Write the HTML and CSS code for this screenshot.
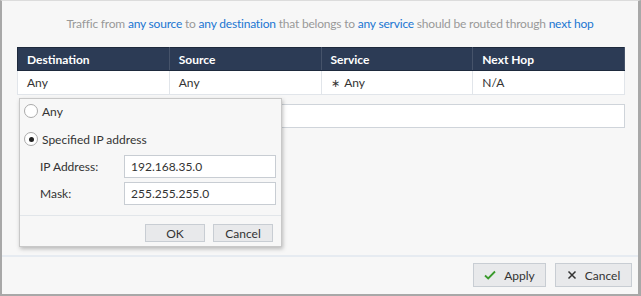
FILE: index.html
```html
<!DOCTYPE html>
<html lang="en">
<head>
    <meta charset="UTF-8">
    <title>Route Rule</title>
    <link rel="stylesheet" href="styles.css">
</head>
<body>
    <div class="frame">
        <p class="summary">
            Traffic from <a href="#">any source</a> to <a href="#">any destination</a> that belongs to <a href="#">any service</a> should be routed through <a href="#">next hop</a>
        </p>

        <div class="rule-area">
            <table class="rules">
                <thead>
                    <tr>
                        <th>Destination</th>
                        <th>Source</th>
                        <th>Service</th>
                        <th>Next Hop</th>
                    </tr>
                </thead>
                <tbody>
                    <tr>
                        <td>Any</td>
                        <td>Any</td>
                        <td><span class="star">&#x2217;</span> Any</td>
                        <td>N/A</td>
                    </tr>
                </tbody>
            </table>

            <div class="edit-box"></div>

            <!-- destination picker popup -->
            <div class="popup">
                <label class="radio-row">
                    <span class="radio"></span>
                    Any
                </label>
                <label class="radio-row">
                    <span class="radio checked"></span>
                    Specified IP address
                </label>
                <div class="field-row">
                    <span class="field-label">IP Address:</span>
                    <input class="field" type="text" value="192.168.35.0">
                </div>
                <div class="field-row">
                    <span class="field-label">Mask:</span>
                    <input class="field" type="text" value="255.255.255.0">
                </div>
                <div class="popup-actions">
                    <button class="btn small">OK</button>
                    <button class="btn small">Cancel</button>
                </div>
            </div>
        </div>

        <div class="footer">
            <button class="btn">
                <svg width="12" height="10" viewBox="0 0 12 10"><path d="M1 5.5 L4.2 8.5 L11 1.5" fill="none" stroke="#3a9a2c" stroke-width="1.8"/></svg>
                Apply
            </button>
            <button class="btn">
                <svg width="10" height="10" viewBox="0 0 10 10"><path d="M1.5 1.5 L8.5 8.5 M8.5 1.5 L1.5 8.5" fill="none" stroke="#333" stroke-width="1.5"/></svg>
                Cancel
            </button>
        </div>
    </div>
</body>
</html>
```

FILE: styles.css
```css
body {
    margin: 0;
    font-family: Lato, "Open Sans", sans-serif;
    font-size: 12px;
    color: #333;
}
.frame {
    width: 641px;
    height: 296px;
    box-sizing: border-box;
    background-color: #f7f7f7;
    border-top: 1px solid #dcdcdc;
    border-left: 2px solid #a8a8a8;
    border-right: 3px solid #a8a8a8;
    border-bottom: 2px solid #a8a8a8;
    display: flex;
    flex-direction: column;
}
.summary {
    margin: 14px 0 0 0;
    height: 17px;
    line-height: 17px;
    text-align: center;
    color: #999;
    padding-left: 20px;
    letter-spacing: -0.2px;
}
.summary a {
    color: #1a76d2;
    text-decoration: none;
}
.rule-area {
    position: relative;
    margin: 15px 13px 0 15px;
    height: 200px;
}
.rules {
    width: 100%;
    border-collapse: collapse;
    background-color: #fff;
    table-layout: fixed;
}
.rules th {
    background-color: #2c3b55;
    color: #fff;
    font-weight: bold;
    text-align: left;
    height: 22px;
    padding: 0 9px;
    border: 1px solid #1e2a3d;
    border-right: 1px solid #46536a;
}
.rules td {
    height: 23px;
    padding: 0 9px;
    border: 1px solid #e1e5ea;
}
.star {
    font-size: 11px;
    margin-right: 2px;
}
.edit-box {
    margin: 9px 0 0 2px;
    height: 22px;
    background-color: #fff;
    border: 1px solid #cfd4da;
}
.popup {
    position: absolute;
    left: 2px;
    top: 51px;
    width: 261px;
    height: 147px;
    background-color: #f7f7f7;
    border: 1px solid #c8c8c8;
    box-shadow: 1px 2px 4px rgba(0,0,0,0.25);
    display: flex;
    flex-direction: column;
}
.radio-row {
    display: flex;
    align-items: center;
    gap: 4px;
    height: 24px;
    padding-left: 4px;
    margin-top: 0;
}
.radio-row + .radio-row {
    margin-top: 4px;
}
.radio {
    width: 12px;
    height: 12px;
    border: 1px solid #aaa;
    border-radius: 50%;
    background-color: #fff;
    display: flex;
    align-items: center;
    justify-content: center;
}
.radio.checked::after {
    content: "";
    width: 5px;
    height: 5px;
    border-radius: 50%;
    background-color: #222;
}
.field-row {
    display: flex;
    align-items: center;
    margin-top: 4px;
    padding-left: 20px;
}
.field-label {
    width: 84px;
}
.field {
    width: 152px;
    height: 23px;
    box-sizing: border-box;
    border: 1px solid #c8cdd3;
    padding: 0 6px;
    font: inherit;
    color: #333;
}
.popup-actions {
    margin-top: 10px;
    border-top: 1px solid #e2e6ea;
    display: flex;
    justify-content: flex-end;
    gap: 8px;
    padding: 8px 8px 0 0;
}
.btn {
    font: inherit;
    color: #333;
    background-color: #e8e9eb;
    border: 1px solid #c8cdd3;
    display: flex;
    align-items: center;
    justify-content: center;
    gap: 8px;
    height: 24px;
    width: 73px;
    padding: 0;
}
.btn.small {
    width: 60px;
    height: 18px;
}
.footer {
    margin-top: 8px;
    border-top: 2px solid #e6ebf1;
    display: flex;
    justify-content: flex-end;
    gap: 9px;
    padding: 6px 6px 0 0;
}
.footer .btn + .btn {
    width: 77px;
}
```
